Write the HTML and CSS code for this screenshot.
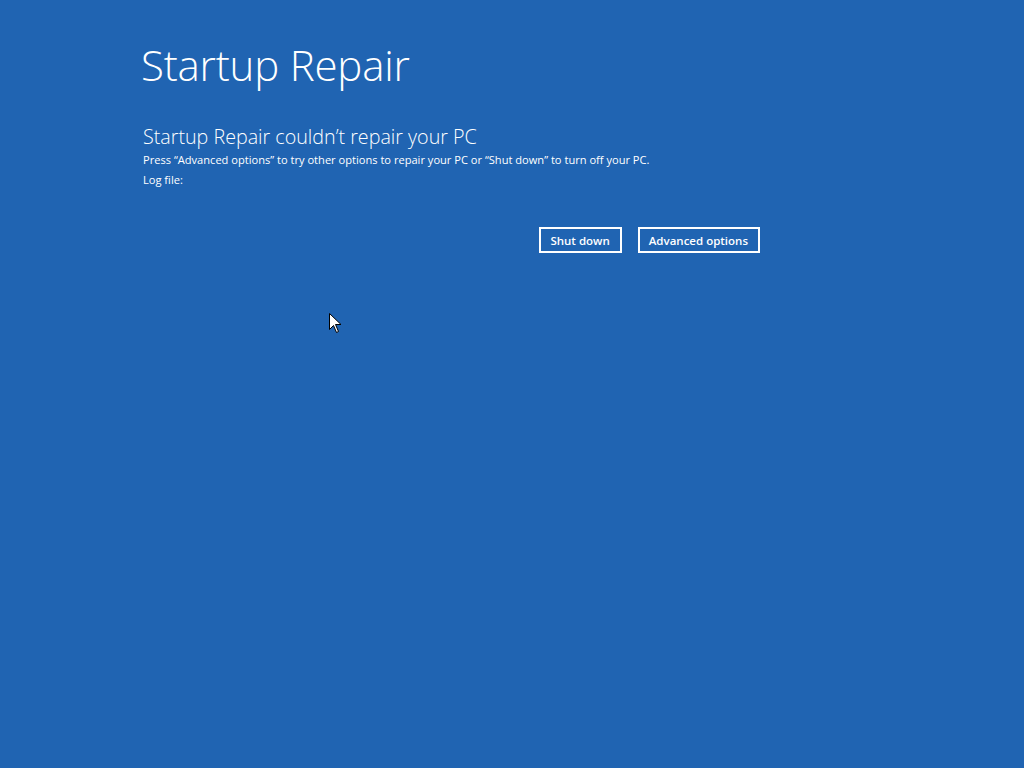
FILE: index.html
```html
<!DOCTYPE html>
<html lang="en">
<head>
    <meta charset="UTF-8">
    <title>Startup Repair</title>
    <link rel="stylesheet" href="styles.css">
</head>
<body>
    <div class="page">
        <h1 class="title">Startup Repair</h1>
        <h2 class="subtitle">Startup Repair couldn’t repair your PC</h2>
        <p class="text">Press “Advanced options” to try other options to repair your PC or “Shut down” to turn off your PC.</p>
        <p class="text log">Log file:</p>
        <div class="actions">
            <button class="btn">Shut down</button>
            <button class="btn">Advanced options</button>
        </div>
    </div>

    <!-- mouse pointer -->
    <svg class="cursor" width="13" height="21" viewBox="0 0 13 21">
        <path d="M0.5 0.5 L0.5 16.5 L4.5 12.5 L7.5 19.5 L9.5 18.5 L6.5 11.5 L12 11.5 Z" fill="#fff" stroke="#000" stroke-width="1"/>
    </svg>
</body>
</html>
```

FILE: styles.css
```css
html, body {
    margin: 0;
    height: 100%;
}
body {
    background-color: #2064b2;
    color: #fff;
    font-family: "Open Sans", "Liberation Sans", sans-serif;
    overflow: hidden;
}
.page {
    padding: 36px 0 0 143px;
    width: 617px;
}
.title {
    font-size: 42px;
    font-weight: 300;
    margin: 0 0 0 -2px;
    line-height: 58px;
    letter-spacing: -0.2px;
}
.subtitle {
    font-size: 19.7px;
    font-weight: 300;
    margin: 30px 0 0 0;
    line-height: 26px;
}
.text {
    font-size: 11.1px;
    margin: 0;
    line-height: 20px;
}
.log {
    margin-top: 0;
}
.actions {
    display: flex;
    justify-content: flex-end;
    gap: 16px;
    margin-top: 37px;
}
.btn {
    background: transparent;
    color: #fff;
    border: 2px solid #fff;
    font-family: "Open Sans", "Liberation Sans", sans-serif;
    font-size: 11.5px;
    font-weight: 600;
    height: 26px;
    padding: 0 10px 0 9px;
    cursor: default;
}
.cursor {
    position: absolute;
    left: 329px;
    top: 313px;
}
```
